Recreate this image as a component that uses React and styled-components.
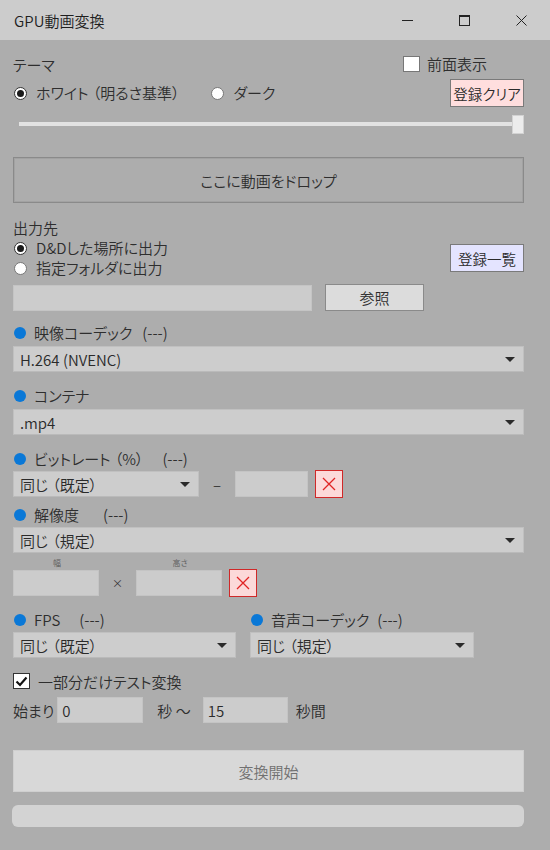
import React from 'react';
import styled, { createGlobalStyle } from 'styled-components';

const GlobalStyle = createGlobalStyle`
    *, *::before, *::after {
        box-sizing: border-box;
    }
    html, body {
        margin: 0;
        padding: 0;
        background: #adadad;
    }
    body {
        font-family: "Noto Sans CJK JP", "Noto Sans", sans-serif;
        font-feature-settings: "palt";
        font-size: 15px;
        font-weight: 350;
        color: #2e2e2e;
    }
`;

const Window = styled.div`
    width: 550px;
    height: 850px;
    background: #adadad;
    display: flex;
    flex-direction: column;
    overflow: hidden;
`;

const TitleBar = styled.div`
    height: 40px;
    background: #cccccc;
    display: flex;
    align-items: center;
    padding-left: 14px;
    flex-shrink: 0;
`;

const Title = styled.div`
    font-size: 15px;
    color: #1e1e1e;
`;

const Controls = styled.div`
    margin-left: auto;
    display: flex;
    height: 100%;
`;

const ControlButton = styled.div`
    width: 57px;
    height: 100%;
    display: flex;
    align-items: center;
    justify-content: center;
`;

const Content = styled.div`
    padding: 0 26px 0 13px;
    display: flex;
    flex-direction: column;
`;

const Row = styled.div`
    display: flex;
    align-items: center;
    margin-top: ${p => p.$top || 0}px;
    height: ${p => (p.$height ? `${p.$height}px` : 'auto')};
`;

const Label = styled.div`
    line-height: 20px;
    height: 20px;
    margin-top: ${p => p.$top || 0}px;
`;

const Paren = styled.span`
    padding-left: ${p => (p.$open ? 4 : 0)}px;
    padding-right: ${p => (p.$open ? 0 : 3)}px;
`;

const Dim = styled.span`
    margin-left: ${p => p.$gap ?? 22}px;
`;

const DotLabel = styled.div`
    display: flex;
    align-items: center;
    line-height: 20px;
    height: 20px;
    white-space: pre;
    margin-top: ${p => p.$top || 0}px;
    &::before {
        content: '';
        width: 12px;
        height: 12px;
        border-radius: 50%;
        background: #0a78d7;
        margin: 0 8px 0 1px;
    }
`;

const RadioItem = styled.label`
    display: flex;
    align-items: center;
    height: 20px;
    line-height: 20px;
    white-space: nowrap;
    margin-left: ${p => (p.$pushRight ? 'auto' : '0')};
    margin-right: ${p => p.$gap || 0}px;
`;

const RadioCircle = styled.span`
    width: 13px;
    height: 13px;
    border-radius: 50%;
    background: #fff;
    border: 1px solid ${p => (p.$on ? '#333' : '#777')};
    margin: 0 9px 0 1px;
    display: flex;
    align-items: center;
    justify-content: center;
    &::after {
        content: '';
        display: ${p => (p.$on ? 'block' : 'none')};
        width: 7px;
        height: 7px;
        border-radius: 50%;
        background: #1a1a1a;
    }
`;

const CheckBox = styled.span`
    width: 17px;
    height: 16px;
    background: #fff;
    border: 1px solid ${p => (p.$on ? '#333' : '#777')};
    margin-right: ${p => p.$gap || 7}px;
    display: flex;
    align-items: center;
    justify-content: center;
`;

const SmallButton = styled.div`
    width: 74px;
    height: 28px;
    margin-left: auto;
    border: 1px solid #7a7a7a;
    background: ${p => p.$bg};
    display: flex;
    align-items: center;
    justify-content: center;
    color: #2a2a2a;
    font-size: 14.5px;
    white-space: nowrap;
`;

const SliderWrap = styled.div`
    margin-top: 7px;
    height: 20px;
    display: flex;
    align-items: center;
    padding-left: 6px;
`;

const Track = styled.div`
    flex: 1;
    height: 4px;
    background: #e2e2e2;
`;

const Thumb = styled.div`
    width: 12px;
    height: 19px;
    background: #ececec;
    border: 1px solid #d2d2d2;
`;

const DropZone = styled.div`
    margin-top: 23px;
    height: 46px;
    border: 1px solid #8a8a8a;
    box-shadow: inset 0 0 0 1px #a2a2a2;
    display: flex;
    align-items: center;
    justify-content: center;
    color: #2e2e2e;
`;

const RadioColumn = styled.div`
    display: flex;
    flex-direction: column;
`;

const TextBox = styled.div`
    width: ${p => p.$width}px;
    height: 26px;
    background: #cccccc;
    border: 1px solid #c4c4c4;
    display: flex;
    align-items: center;
    padding-left: 4px;
    color: #2a2a2a;
    margin-left: ${p => p.$left || 0}px;
    flex-shrink: 0;
`;

const Button = styled.div`
    width: ${p => p.$width}px;
    height: 27px;
    margin-left: ${p => p.$left || 0}px;
    background: #dcdcdc;
    border: 1px solid #8a8a8a;
    display: flex;
    align-items: center;
    justify-content: center;
`;

const Select = styled.div`
    height: 26px;
    width: ${p => (p.$width ? `${p.$width}px` : '100%')};
    margin-top: ${p => p.$top || 0}px;
    background: #cdcdcd;
    border: 1px solid #c0c0c0;
    border-bottom-color: #bababa;
    display: flex;
    align-items: center;
    padding: 0 8px 0 6px;
    color: #2a2a2a;
    white-space: nowrap;
    flex-shrink: 0;
`;

const Arrow = styled.span`
    margin-left: auto;
    width: 0;
    height: 0;
    border-left: 5px solid transparent;
    border-right: 5px solid transparent;
    border-top: 5px solid #2a2a2a;
`;

const ClearButton = styled.div`
    width: 28px;
    height: 28px;
    margin-left: ${p => p.$left || 0}px;
    background: #fcd9d9;
    border: 1px solid #d02828;
    display: flex;
    align-items: center;
    justify-content: center;
    flex-shrink: 0;
`;

const Sep = styled.span`
    width: ${p => p.$width}px;
    text-align: center;
    font-size: ${p => p.$size || 15}px;
    color: #333;
    flex-shrink: 0;
`;

const SizeLabels = styled.div`
    margin-top: 5px;
    height: 10px;
    display: flex;
    font-size: 8px;
    line-height: 10px;
    color: #5a5a5a;
`;

const SizeLabel = styled.span`
    width: ${p => p.$width}px;
    text-align: center;
`;

const Columns = styled.div`
    display: flex;
    margin-top: ${p => p.$top || 0}px;
`;

const Column = styled.div`
    display: flex;
    flex-direction: column;
    margin-left: ${p => p.$left || 0}px;
`;

const Text = styled.span`
    margin-left: ${p => p.$left || 0}px;
    white-space: nowrap;
`;

const StartButton = styled.div`
    margin-top: 27px;
    height: 42px;
    background: #d8d8d8;
    border: 1px solid #cfcfcf;
    display: flex;
    align-items: center;
    justify-content: center;
    color: #707070;
`;

const Progress = styled.div`
    margin-top: 13px;
    height: 22px;
    margin-left: -1px;
    background: #d3d3d3;
    border-radius: 6px;
`;

// full-width brackets keep part of their side spacing, as in the original UI font
const jp = text =>
    text.split(/([（）])/).map((part, i) =>
        part === '（' || part === '）'
            ? <Paren key={i} $open={part === '（'}>{part}</Paren>
            : part
    );

const XIcon = () => (
    <svg width="14" height="14" viewBox="0 0 14 14">
        <path d="M1 1 L13 13 M13 1 L1 13" stroke="#e02424" strokeWidth="1.3" fill="none" />
    </svg>
);

const Radio = ({ on, gap, children }) => (
    <RadioItem $gap={gap}>
        <RadioCircle $on={on} />
        {children}
    </RadioItem>
);

const Dropdown = ({ value, width, top }) => (
    <Select $width={width} $top={top}>
        <span>{jp(value)}</span>
        <Arrow />
    </Select>
);

export default function App() {
    return (
        <Window>
            <GlobalStyle />
            <TitleBar>
                <Title>GPU動画変換</Title>
                <Controls>
                    <ControlButton>
                        <svg width="11" height="11" viewBox="0 0 11 11">
                            <path d="M0 5.5 H11" stroke="#222" strokeWidth="1" />
                        </svg>
                    </ControlButton>
                    <ControlButton>
                        <svg width="11" height="11" viewBox="0 0 11 11">
                            <rect x="0.5" y="0.5" width="10" height="10" fill="none" stroke="#222" strokeWidth="1" />
                            <path d="M0 1.5 H11" stroke="#222" strokeWidth="1" />
                        </svg>
                    </ControlButton>
                    <ControlButton>
                        <svg width="11" height="11" viewBox="0 0 11 11">
                            <path d="M0.5 0.5 L10.5 10.5 M10.5 0.5 L0.5 10.5" stroke="#222" strokeWidth="1" fill="none" />
                        </svg>
                    </ControlButton>
                </Controls>
            </TitleBar>

            <Content>
                <Row $top={16} $height={16}>
                    <Text>テーマ</Text>
                    <RadioItem $pushRight $gap={37}>
                        <CheckBox />
                        前面表示
                    </RadioItem>
                </Row>

                <Row $top={7} $height={28}>
                    <Radio on gap={28}>{jp('ホワイト（明るさ基準）')}</Radio>
                    <Radio>ダーク</Radio>
                    <SmallButton $bg="#ffdede">登録クリア</SmallButton>
                </Row>

                <SliderWrap>
                    <Track />
                    <Thumb />
                </SliderWrap>

                <DropZone>ここに動画をドロップ</DropZone>

                <Label $top={15}>出力先</Label>
                <Row>
                    <RadioColumn>
                        <Radio on>D&amp;Dした場所に出力</Radio>
                        <Radio>指定フォルダに出力</Radio>
                    </RadioColumn>
                    <SmallButton $bg="#e4e4ff">登録一覧</SmallButton>
                </Row>

                <Row $top={6}>
                    <TextBox $width={299} />
                    <Button $width={99} $left={13}>参照</Button>
                </Row>

                <DotLabel $top={12}>映像コーデック<Dim $gap={10}>(---)</Dim></DotLabel>
                <Dropdown value="H.264 (NVENC)" top={3} />

                <DotLabel $top={14}>コンテナ</DotLabel>
                <Dropdown value=".mp4" top={3} />

                <DotLabel $top={14}>{jp('ビットレート（%）')}<Dim $gap={16}>(---)</Dim></DotLabel>
                <Row $top={1} $height={28}>
                    <Dropdown value="同じ（既定）" width={186} />
                    <Sep $width={36}>–</Sep>
                    <TextBox $width={73} />
                    <ClearButton $left={7}><XIcon /></ClearButton>
                </Row>

                <DotLabel $top={7}>解像度<Dim $gap={24}>(---)</Dim></DotLabel>
                <Dropdown value="同じ（規定）" top={2} />

                <SizeLabels>
                    <SizeLabel $width={88}>幅</SizeLabel>
                    <SizeLabel $width={36} />
                    <SizeLabel $width={86}>高さ</SizeLabel>
                </SizeLabels>
                <Row $top={1} $height={28}>
                    <TextBox $width={86} />
                    <Sep $width={37} $size={11}>×</Sep>
                    <TextBox $width={86} />
                    <ClearButton $left={7}><XIcon /></ClearButton>
                </Row>

                <Columns $top={13}>
                    <Column>
                        <DotLabel>FPS<Dim $gap={19}>(---)</Dim></DotLabel>
                        <Dropdown value="同じ（既定）" width={223} top={2} />
                    </Column>
                    <Column $left={14}>
                        <DotLabel>音声コーデック<Dim $gap={8}>(---)</Dim></DotLabel>
                        <Dropdown value="同じ（規定）" width={224} top={2} />
                    </Column>
                </Columns>

                <Row $top={15} $height={16}>
                    <CheckBox $on $gap={8}>
                        <svg width="13" height="13" viewBox="0 0 13 13">
                            <path d="M1.5 6.5 L5 10 L11.5 2.5" stroke="#111" strokeWidth="2.2" fill="none" />
                        </svg>
                    </CheckBox>
                    一部分だけテスト変換
                </Row>

                <Row $top={8}>
                    <Text>始まり</Text>
                    <TextBox $width={86} $left={3}>0</TextBox>
                    <Text $left={14}>秒 〜</Text>
                    <TextBox $width={85} $left={12}>15</TextBox>
                    <Text $left={8}>秒間</Text>
                </Row>

                <StartButton>変換開始</StartButton>
                <Progress />
            </Content>
        </Window>
    );
}
